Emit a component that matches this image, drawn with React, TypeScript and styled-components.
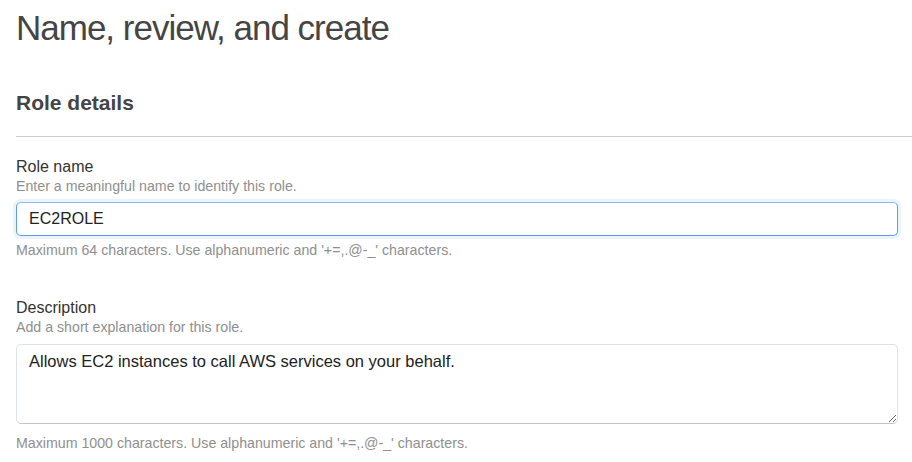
import styled, { createGlobalStyle } from "styled-components";

const GlobalStyle = createGlobalStyle`
  html, body {
    margin: 0;
    padding: 0;
    background: #ffffff;
  }
  body {
    font-family: "Liberation Sans", Arial, Helvetica, sans-serif;
  }
`;

const Page = styled.div`
  width: 912px;
  height: 462px;
  overflow: hidden;
  padding: 8px 0 0 16px;
  box-sizing: border-box;
`;

const PageTitle = styled.h1`
  margin: 0;
  font-size: 35px;
  line-height: 40px;
  letter-spacing: -1px;
  font-weight: 400;
  color: #454545;
`;

const SectionTitle = styled.h2`
  margin: 43px 0 0;
  font-size: 21px;
  line-height: 24px;
  font-weight: 700;
  color: #444444;
`;

const Divider = styled.hr`
  margin: 21px 0 0;
  border: none;
  border-top: 1px solid #cccccc;
  height: 0;
`;

const Field = styled.div<{ gap?: number }>`
  display: flex;
  flex-direction: column;
  width: 882px;
  margin-top: ${({ gap = 0 }) => `${gap}px`};
`;

const Label = styled.label`
  font-size: 16px;
  line-height: 20px;
  color: #333333;
`;

const Hint = styled.div<{ space?: number }>`
  margin-top: ${({ space = 0 }) => `${space}px`};
  font-size: 14.2px;
  line-height: 18px;
  color: #8f8f8f;
`;

const TextInput = styled.input`
  margin-top: 7px;
  height: 34px;
  box-sizing: border-box;
  padding: 0 12px;
  border: 1px solid #5c9ded;
  border-top-color: #8dbbf3;
  border-radius: 5px;
  box-shadow: 0 0 0 3px rgba(92, 157, 237, 0.12);
  font-family: inherit;
  font-size: 16px;
  color: #222222;
  outline: none;
`;

const TextArea = styled.textarea`
  margin-top: 8px;
  height: 80px;
  box-sizing: border-box;
  padding: 6px 12px;
  border: 1px solid #dde3e8;
  border-bottom-color: #c4c4c4;
  border-radius: 5px;
  font-family: inherit;
  font-size: 16.5px;
  line-height: 20px;
  color: #222222;
  resize: vertical;
  outline: none;
`;

export default function App() {
  return (
    <Page>
      <GlobalStyle />
      <PageTitle>Name, review, and create</PageTitle>
      <SectionTitle>Role details</SectionTitle>
      <Divider />

      <Field gap={20}>
        <Label>Role name</Label>
        <Hint>Enter a meaningful name to identify this role.</Hint>
        <TextInput defaultValue="EC2ROLE" />
        <Hint space={5}>
          Maximum 64 characters. Use alphanumeric and '+=,.@-_' characters.
        </Hint>
      </Field>

      <Field gap={39}>
        <Label>Description</Label>
        <Hint>Add a short explanation for this role.</Hint>
        <TextArea defaultValue="Allows EC2 instances to call AWS services on your behalf." />
        <Hint space={10}>
          Maximum 1000 characters. Use alphanumeric and '+=,.@-_' characters.
        </Hint>
      </Field>
    </Page>
  );
}
